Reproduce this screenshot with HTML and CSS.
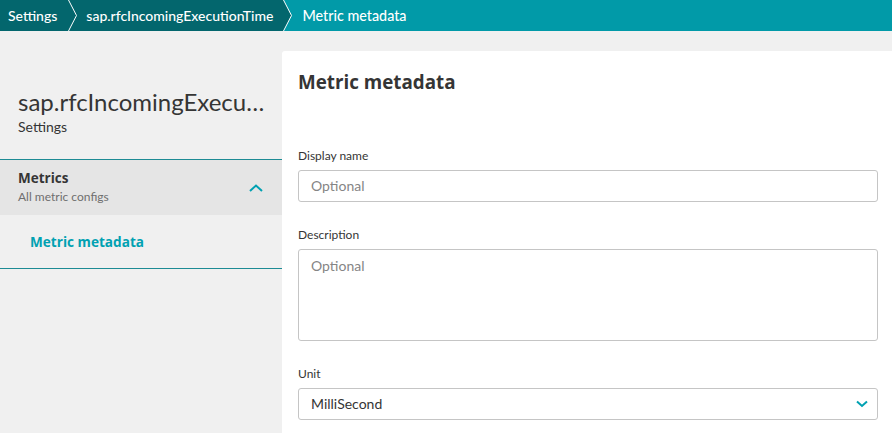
FILE: index.html
```html
<!DOCTYPE html>
<html lang="en">
<head>
<meta charset="utf-8">
<title>Metric metadata</title>
<link rel="stylesheet" href="styles.css">
</head>
<body>
<header class="crumbs">
  <a class="crumb crumb-dark">Settings</a>
  <svg class="sep sep-dark" width="10" height="31" viewBox="0 0 10 31"><polyline points="0.5,0 8.5,15.5 0.5,31" fill="none" stroke="#ffffff" stroke-width="1"/></svg>
  <a class="crumb crumb-dark">sap.rfcIncomingExecutionTime</a>
  <svg class="sep" width="10" height="31" viewBox="0 0 10 31"><polygon points="0,0 0.5,0 8.5,15.5 0.5,31 0,31" fill="#03666d"/><polyline points="0.5,0 8.5,15.5 0.5,31" fill="none" stroke="#ffffff" stroke-width="1"/></svg>
  <a class="crumb crumb-current">Metric metadata</a>
</header>
<div class="layout">
  <aside class="sidebar">
    <div class="side-head">
      <h1 class="side-title">sap.rfcIncomingExecutionTime</h1>
      <div class="side-sub">Settings</div>
    </div>
    <nav class="side-nav">
      <div class="group-head">
        <div class="group-text">
          <div class="group-title">Metrics</div>
          <div class="group-desc">All metric configs</div>
        </div>
        <svg class="group-chevron" width="14" height="8" viewBox="0 0 14 8"><polyline points="1,7 7,1.5 13,7" fill="none" stroke="#00a1b2" stroke-width="2"/></svg>
      </div>
      <a class="nav-item">Metric metadata</a>
    </nav>
  </aside>
  <main class="panel">
    <h2 class="panel-title">Metric metadata</h2>
    <div class="field">
      <label class="field-label">Display name</label>
      <div class="input placeholder">Optional</div>
    </div>
    <div class="field">
      <label class="field-label">Description</label>
      <div class="input textarea placeholder">Optional</div>
    </div>
    <div class="field">
      <label class="field-label">Unit</label>
      <div class="input select">
        <span>MilliSecond</span>
        <svg class="select-chevron" width="12" height="8" viewBox="0 0 12 8"><polyline points="1,1.5 6,6 11,1.5" fill="none" stroke="#00a1b2" stroke-width="2"/></svg>
      </div>
    </div>
  </main>
</div>
</body>
</html>
```
FILE: styles.css
```css
* { box-sizing: border-box; }
html, body { margin: 0; padding: 0; }
body {
  font-family: "Lato", "Liberation Sans", sans-serif;
  background: #f0f0f0;
  color: #353535;
  width: 892px;
  height: 433px;
  overflow: hidden;
}
.crumbs {
  display: flex;
  height: 31px;
  background: #019aa8;
  align-items: stretch;
}
.crumb {
  display: flex;
  align-items: center;
  color: #ffffff;
  font-size: 14px;
  font-weight: 500;
  line-height: 31px;
  white-space: nowrap;
}
.crumb-dark { background: #03666d; }
.crumb:first-child { padding: 0 11px 0 8px; }
.crumb-dark + .sep + .crumb-dark { padding: 0 10px 0 8px; }
.crumb-current { padding: 0 0 0 9px; font-size: 14.3px; }
.sep { display: block; flex: none; }
.sep-dark { background: #03666d; }

.layout {
  display: flex;
  align-items: stretch;
  height: 402px;
  overflow: hidden;
}
.sidebar {
  width: 282px;
  flex: none;
}
.side-head {
  padding: 56px 12px 0 18px;
  height: 128px;
}
.side-title {
  margin: 0;
  font-size: 24px;
  font-weight: 400;
  line-height: 30px;
  color: #353535;
  white-space: nowrap;
  overflow: hidden;
  text-overflow: ellipsis;
}
.side-sub {
  font-size: 14px;
  line-height: 20px;
  color: #353535;
}
.side-nav {
  border-top: 1px solid #1d8b94;
  border-bottom: 1px solid #1d8b94;
}
.group-head {
  display: flex;
  align-items: center;
  justify-content: space-between;
  background: #e5e5e5;
  height: 55px;
  padding: 0 18px;
}
.group-title {
  font-family: "Open Sans", "Lato", sans-serif;
  font-size: 13.5px;
  font-weight: 700;
  line-height: 18px;
  color: #353535;
}
.group-desc {
  font-size: 12px;
  line-height: 20px;
  color: #6f6f6f;
}
.group-chevron { display: block; margin-right: 1px; }
.nav-item {
  display: block;
  padding: 0 30px;
  height: 53px;
  line-height: 53px;
  font-family: "Open Sans", "Lato", sans-serif;
  font-size: 13.6px;
  font-weight: 700;
  color: #00a1b2;
}

.panel {
  flex: 1;
  margin-top: 20px;
  background: #ffffff;
  border-radius: 3px 0 0 0;
  padding: 19px 14px 0 16px;
}
.panel-title {
  margin: 0 0 54px;
  font-family: "Open Sans", "Lato", sans-serif;
  font-size: 18.8px;
  font-weight: 700;
  line-height: 24px;
  color: #353535;
}
.field { margin-bottom: 25px; }
.field:last-child { margin-bottom: 0; }
.field-label {
  display: block;
  font-size: 12px;
  line-height: 16px;
  color: #353535;
  margin-bottom: 6px;
}
.input {
  height: 32px;
  border: 1px solid #c5c5c5;
  border-radius: 3px;
  padding: 0 12px;
  font-size: 14px;
  line-height: 30px;
  color: #353535;
}
.placeholder { color: #858585; }
.textarea {
  height: 92px;
  line-height: 20px;
  padding-top: 6px;
}
.select {
  display: flex;
  align-items: center;
  justify-content: space-between;
}
.select-chevron { display: block; margin-right: -3px; }
```
